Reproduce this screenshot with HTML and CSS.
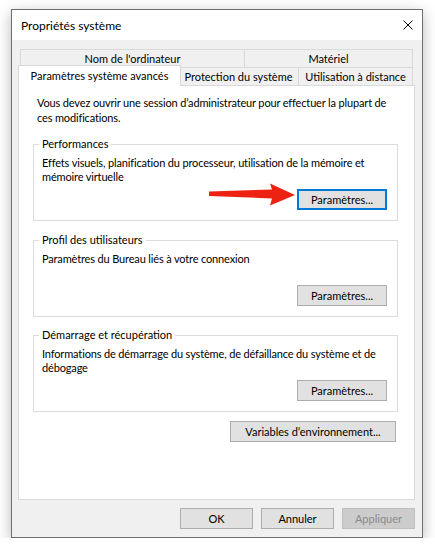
FILE: index.html
```html
<!DOCTYPE html>
<html lang="fr">
<head>
    <meta charset="UTF-8">
    <meta name="viewport" content="width=device-width, initial-scale=1.0">
    <title>Propriétés système</title>
    <link rel="stylesheet" href="styles.css">
</head>
<body>
    <div class="window">
        <div class="titlebar">
            <span class="title">Propriétés système</span>
            <svg class="close" width="10" height="10" viewBox="0 0 10 10">
                <path d="M0.5 0.5 L9.5 9.5 M9.5 0.5 L0.5 9.5" stroke="#000" stroke-width="1" fill="none"/>
            </svg>
        </div>

        <div class="dialog">
            <div class="tabs">
                <div class="tab-row">
                    <div class="tab tab-name">Nom de l'ordinateur</div>
                    <div class="tab tab-hw">Matériel</div>
                </div>
                <div class="tab-row">
                    <div class="tab tab-adv active">Paramètres système avancés</div>
                    <div class="tab tab-prot">Protection du système</div>
                    <div class="tab tab-remote">Utilisation à distance</div>
                </div>
            </div>

            <div class="panel">
                <p class="intro">Vous devez ouvrir une session d’administrateur pour effectuer la plupart de<br>ces modifications.</p>

                <fieldset class="group">
                    <legend>Performances</legend>
                    <div class="group-body">
                        <p>Effets visuels, planification du processeur, utilisation de la mémoire et<br>mémoire virtuelle</p>
                        <div class="group-actions">
                            <!-- flèche rouge ajoutée sur la capture -->
                            <svg class="arrow" width="86" height="23" viewBox="0 0 86 23">
                                <path d="M0 8.5 L63 6.5 L61 0.5 L86 12 L61 22.5 L63 15.5 L0 13 Z" fill="#ee2213"/>
                            </svg>
                            <button class="btn btn-wide focused">Paramètres...</button>
                        </div>
                    </div>
                </fieldset>

                <fieldset class="group">
                    <legend>Profil des utilisateurs</legend>
                    <div class="group-body">
                        <p>Paramètres du Bureau liés à votre connexion</p>
                        <div class="group-actions">
                            <button class="btn btn-wide">Paramètres...</button>
                        </div>
                    </div>
                </fieldset>

                <fieldset class="group group-last">
                    <legend>Démarrage et récupération</legend>
                    <div class="group-body">
                        <p>Informations de démarrage du système, de défaillance du système et de<br>débogage</p>
                        <div class="group-actions">
                            <button class="btn btn-wide">Paramètres...</button>
                        </div>
                    </div>
                </fieldset>

                <button class="btn btn-env">Variables d’environnement...</button>
            </div>

            <div class="actions">
                <button class="btn">OK</button>
                <button class="btn">Annuler</button>
                <button class="btn" disabled>Appliquer</button>
            </div>
        </div>
    </div>
</body>
</html>
```

FILE: styles.css
```css
body {
    margin: 0;
    background-color: #fff;
    font-family: "Lato", "Liberation Sans", sans-serif;
    font-size: 11px;
    color: #000;
}
p {
    margin: 0;
}
.window {
    box-sizing: border-box;
    width: 412px;
    height: 529px;
    margin: 9px 0 0 11px;
    border: 1px solid #6e6e6e;
    background-color: #f0f0f0;
    box-shadow: 0 4px 14px rgba(0, 0, 0, 0.28);
    display: flex;
    flex-direction: column;
}
.titlebar {
    height: 30px;
    background-color: #fff;
    display: flex;
    align-items: center;
    justify-content: space-between;
    padding: 0 9px;
}
.title {
    font-size: 12px;
}
.close {
    display: block;
}
.dialog {
    flex: 1;
    display: flex;
    flex-direction: column;
    padding: 9px 7px 0 6px;
}
.tab-row {
    display: flex;
    align-items: flex-start;
    margin: 0 2px;
}
.tab {
    box-sizing: border-box;
    height: 18px;
    line-height: 17px;
    text-align: center;
    white-space: nowrap;
    background-color: #f0f0f0;
    border: 1px solid #d9d9d9;
    border-bottom: none;
}
.tab + .tab {
    margin-left: -1px;
}
.tab-name {
    width: 225px;
}
.tab-hw {
    width: 169px;
}
.tab-adv {
    width: 159px;
}
.tab-prot {
    width: 121px;
}
.tab-remote {
    width: 115px;
}
.tab.active {
    position: relative;
    z-index: 1;
    width: 163px;
    height: 21px;
    line-height: 19px;
    margin: -2px -2px -1px -2px;
    background-color: #fff;
}
.panel {
    box-sizing: border-box;
    height: 415px;
    background-color: #fff;
    border: 1px solid #d9d9d9;
    padding: 9px 16px 0 14px;
    display: flex;
    flex-direction: column;
}
.intro {
    padding-left: 4px;
    line-height: 15px;
    letter-spacing: -0.15px;
    white-space: nowrap;
}
.group {
    margin: 12px 0 0 0;
    padding: 5px 10px 10px 8px;
    border: 1px solid #dcdcdc;
    min-width: 0;
}
.group-last {
    margin-top: 11px;
}
.group legend {
    padding: 0 3px;
    margin-left: -3px;
    line-height: 14px;
}
.group-body {
    height: 54px;
    display: flex;
    flex-direction: column;
}
.group-body p {
    line-height: 14px;
    letter-spacing: -0.15px;
    white-space: nowrap;
}
.group-actions {
    margin-top: auto;
    display: flex;
    justify-content: flex-end;
    align-items: flex-start;
}
.arrow {
    display: block;
    margin: -6px 2px 0 0;
}
.btn {
    box-sizing: border-box;
    width: 73px;
    height: 21px;
    padding: 0;
    font-family: inherit;
    font-size: 11px;
    color: #000;
    background-color: #e1e1e1;
    border: 1px solid #adadad;
}
.btn-wide {
    width: 90px;
}
.btn.focused {
    border: 2px solid #0078d7;
}
.btn:disabled {
    color: #8a8a8a;
    background-color: #cccccc;
    border-color: #bfbfbf;
}
.btn-env {
    width: 166px;
    margin: 9px 2px 0 0;
    align-self: flex-end;
}
.actions {
    display: flex;
    justify-content: flex-end;
    gap: 8px;
    margin-top: 8px;
}
```
